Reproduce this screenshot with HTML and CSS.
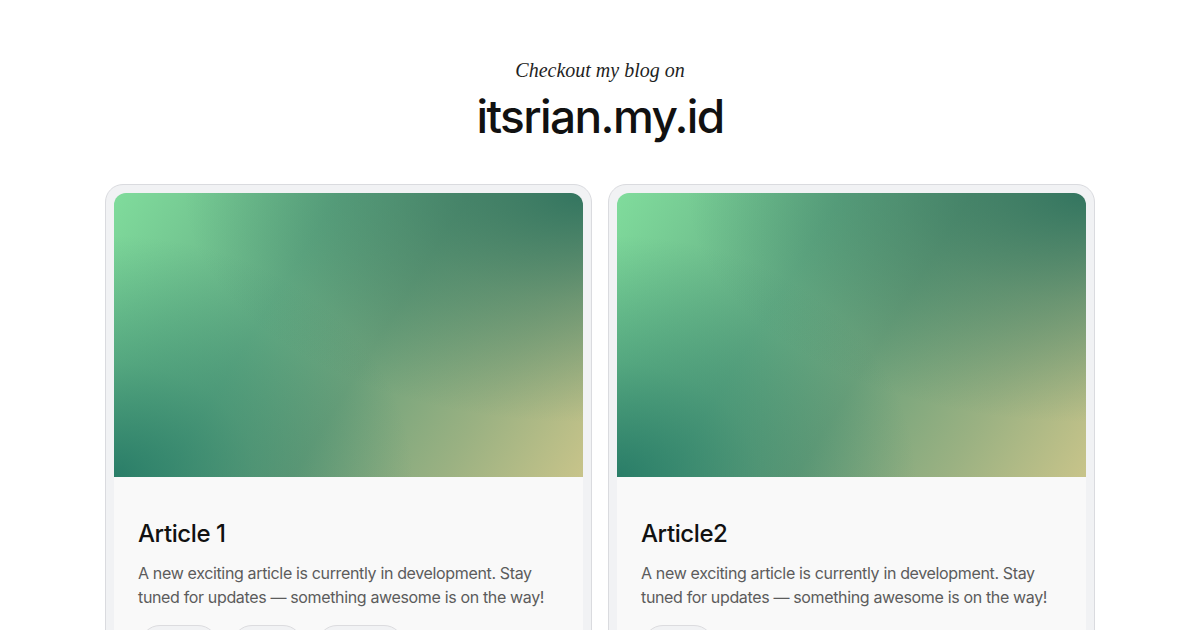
FILE: index.html
```html
<!DOCTYPE html>
<html lang="en">
<head>
<meta charset="utf-8">
<title>itsrian.my.id</title>
<link rel="stylesheet" href="styles.css">
</head>
<body>
<main class="page">
  <header class="intro">
    <p class="kicker">Checkout my blog on</p>
    <h1 class="site">itsrian.my.id</h1>
  </header>
  <section class="cards">
    <article class="card">
      <div class="cover"></div>
      <div class="body">
        <h2 class="title">Article 1</h2>
        <p class="desc">A new exciting article is currently in development. Stay tuned for updates — something awesome is on the way!</p>
        <ul class="tags">
          <li class="tag t1">Tutorial</li>
          <li class="tag t2">Coding</li>
          <li class="tag t3">Next.js</li>
        </ul>
      </div>
    </article>
    <article class="card">
      <div class="cover"></div>
      <div class="body">
        <h2 class="title">Article2</h2>
        <p class="desc">A new exciting article is currently in development. Stay tuned for updates — something awesome is on the way!</p>
        <ul class="tags">
          <li class="tag t2">Life</li>
        </ul>
      </div>
    </article>
  </section>
</main>
</body>
</html>
```
FILE: styles.css
```css
* { box-sizing: border-box; }
html, body { margin: 0; padding: 0; background: #ffffff; }
body {
  font-family: "Inter", "Noto Sans", sans-serif;
  color: #111;
  width: 1200px;
  height: 630px;
  overflow: hidden;
}
.page {
  padding-top: 56px;
}
.intro {
  text-align: center;
}
.kicker {
  margin: 0;
  font-family: "Liberation Serif", "DejaVu Serif", serif;
  font-style: italic;
  font-size: 20px;
  line-height: 28px;
  color: #1f1f1f;
}
.site {
  margin: 3px 0 0;
  font-size: 46px;
  line-height: 58px;
  font-weight: 500;
  letter-spacing: -1.6px;
  color: #111;
}
.cards {
  width: 990px;
  margin: 39px auto 0;
  display: grid;
  grid-template-columns: 1fr 1fr;
  gap: 16px;
}
.card {
  border: 1px solid #dadbdf;
  background: #f1f2f4;
  border-radius: 18px;
  padding: 8px 8px 0;
  display: flex;
  flex-direction: column;
}
.cover {
  height: 284px;
  border-radius: 12px 12px 0 0;
  background:
    radial-gradient(ellipse 100% 95% at 100% 0%, rgba(46,114,94,0.95) 0%, rgba(46,114,94,0.45) 40%, rgba(46,114,94,0) 85%),
    radial-gradient(ellipse 75% 100% at 0% 100%, rgba(38,122,102,0.95) 0%, rgba(38,122,102,0.4) 40%, rgba(38,122,102,0) 85%),
    linear-gradient(122deg, #80dc9c 0%, #66ae85 35%, #6ea27b 55%, #9ab182 78%, #c8c48a 100%);
}
.body {
  background: #f9f9f9;
  padding: 39px 24px 24px;
}
.title {
  margin: 0;
  font-size: 24px;
  line-height: 36px;
  font-weight: 500;
  letter-spacing: -0.4px;
  color: #111;
}
.desc {
  margin: 9px 0 0;
  font-size: 16px;
  line-height: 24px;
  color: #5c5c5c;
  letter-spacing: -0.35px;
}
.tags {
  list-style: none;
  margin: 16px 0 0;
  padding: 0 0 0 2px;
  display: flex;
  gap: 14px;
}
.tag {
  border: 1px solid #dcdcdf;
  background: #f1f2f4;
  border-radius: 999px;
  padding: 10px 0;
  text-align: center;
  font-size: 13px;
  line-height: 18px;
  color: #555;
}
.t1 { width: 78px; }
.t2 { width: 71px; }
.t3 { width: 87px; }
```
